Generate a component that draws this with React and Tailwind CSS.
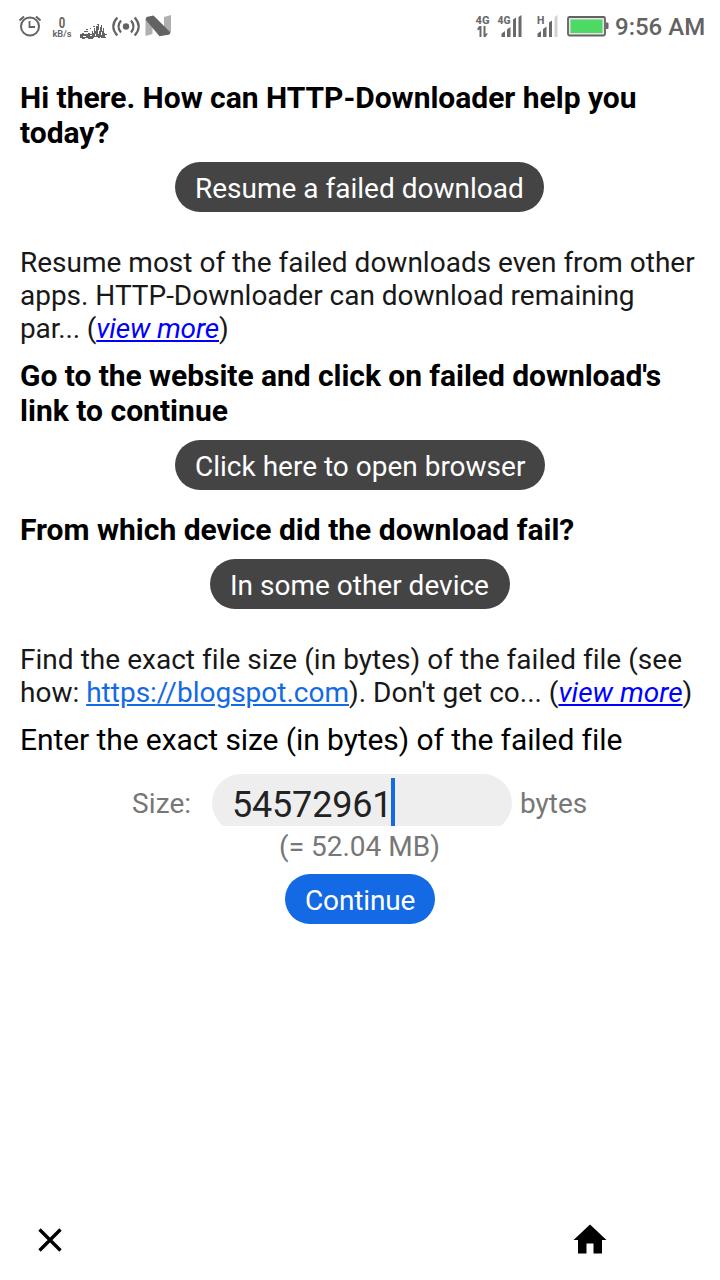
function StatusIconsLeft() {
  return (
    <svg width="190" height="52" viewBox="0 0 190 52" fill="none" stroke="#636363">
      <circle cx="30" cy="26.5" r="9" strokeWidth="2" />
      <path d="M29.5 21v6h5.5" strokeWidth="1.8" />
      <path d="M19.500 20.500l4.500-4M40.500 20.500l-4.500-4" strokeWidth="2" />
      <g fill="#636363" stroke="none" fontFamily="Roboto, sans-serif" textAnchor="middle">
        <text x="62" y="27.500" fontSize="15.500" fontWeight="700" textLength="6.500" lengthAdjust="spacingAndGlyphs">0</text>
        <text x="62" y="37" fontSize="9" fontWeight="600" textLength="19" lengthAdjust="spacingAndGlyphs">kB/s</text>
      </g>
      <path
        d="M80 38v-4h2v-1h2v1h4v-1h2v1h2v-3h1v2h1v-5h1v3h1v-5h2v-2h1v7h1v-4h1v-2h1v6h1v-3h1v5h1v1h2v1h-2v2h1v1h-5v-1h-1v1h-2v-1h-4v1h-1v1h-5v-1h-3v1h-3v-1h-1v1zM84 31h4v1h-4zM86 29h2v1h-2zM90 28h1v1h-1zM93 26h2v1h-2zM97 24h2v1h-2z"
        fill="#636363"
        stroke="none"
        shapeRendering="crispEdges"
      />
      <path d="M83 36.500h3M90 35.500h2M98.500 30v4M101.500 32v3M95.500 34v2" stroke="#fff" strokeWidth="1" shapeRendering="crispEdges" />
      <circle cx="126" cy="26.500" r="3.200" fill="#636363" stroke="none" />
      <path d="M121 20.500q-5 6 0 12M131 20.500q5 6 0 12M117.300 17.500q-8 9 0 18M134.700 17.500q8 9 0 18" strokeWidth="2.200" />
      <path d="M145.500 20l7-3v17l-7 2zM164 17l7-2v17l-7 2z" fill="#b0b0b0" stroke="none" />
      <path d="M145.500 19.500l1-2.500 7-1.500L170.500 32.500l-1 2-10 1.800z" fill="#636363" stroke="none" />
    </svg>
  )
}

function StatusIconsRight() {
  return (
    <svg width="140" height="52" viewBox="470 0 140 52" fill="#6a6a6a">
      <g fontFamily="Roboto, sans-serif" fontWeight="800" fontSize="10.500">
        <text x="475.500" y="24" textLength="14" lengthAdjust="spacingAndGlyphs">4G</text>
        <text x="497.500" y="24" textLength="13" lengthAdjust="spacingAndGlyphs">4G</text>
        <text x="537" y="24">H</text>
      </g>
      <path d="M479.500 26h2v11h-2V29.500l-2 1v-2.500zM483.500 26h2v7.500h2.500l-2.500 3.500h-2z" />
      <path d="M501.500 33.500l3.500-2.500v6h-3.500zM507 29.500l3.500-2.500v10H507zM513 19.500l3-2v19.500h-3zM518.500 17l3-2v22h-3z" />
      <path d="M537.500 33.500l3.500-2.500v6h-3.500zM543 29l3.500-2.500v10.500H543zM549 22.500l3-2v16.500h-3z" />
      <path d="M554.500 17l3-2v22h-3z" fill="#d2d2d2" />
      <rect x="568" y="17" width="37" height="18.500" rx="1.500" fill="#e9e1e9" stroke="#636363" strokeWidth="1.800" />
      <rect x="570.500" y="19.500" width="32" height="13.500" fill="#4cd964" />
      <path d="M606 22.500h1.500q1 0 1 1v4.500q0 1-1 1H606z" />
    </svg>
  )
}

function Pill({ children, className }) {
  return (
    <button className={`block h-[50px] rounded-full px-5 pt-[3px] text-left text-[28px] leading-[47px] whitespace-nowrap text-white ${className}`}>
      {children}
    </button>
  )
}

function ViewMore() {
  return (
    <a className="text-[#0000ff] italic underline">view more</a>
  )
}

export default function App() {
  return (
    <div className="flex h-[1280px] w-[720px] flex-col overflow-hidden bg-white font-['Roboto',sans-serif] text-black">
      <header className="flex h-[52px] shrink-0 items-center">
        <StatusIconsLeft />
        <div className="ml-auto flex items-center">
          <StatusIconsRight />
          <span className="w-[110px] pt-0.5 pl-[5px] text-[24px] leading-7 font-medium whitespace-nowrap text-[#636363]">9:56 AM</span>
        </div>
      </header>

      <main className="flex flex-col items-start px-5 pt-7">
        <h1 className="text-[30px] leading-[35px] font-bold tracking-[-0.02px]">Hi there. How can HTTP-Downloader help you today?</h1>
        <Pill className="mt-3 mr-px w-[369px] self-center bg-[#444444]">Resume a failed download</Pill>
        <p className="mt-[34px] text-[28px] leading-[33px] text-[#181818]">
          Resume most of the failed downloads even from other
          <br />
          <span className="tracking-[-0.02px]">apps. HTTP-Downloader can download remaining</span>
          <br />
          <span className="tracking-[-0.15px]">par... (<ViewMore />)</span>
        </p>
        <h2 className="mt-[13px] text-[30px] leading-[35px] font-bold tracking-[-0.05px]">Go to the website and click on failed download's<br /><span className="tracking-[0.02px]">link to continue</span></h2>
        <Pill className="mt-3 w-[370px] self-center bg-[#444444]">Click here to open browser</Pill>
        <h2 className="mt-[22px] text-[30px] leading-[35px] font-bold">From which device did the download fail?</h2>
        <Pill className="mt-3 w-[300px] self-center bg-[#444444]">In some other device</Pill>
        <p className="mt-[34px] text-[28px] leading-[33px] whitespace-nowrap text-[#181818]">
          <span className="tracking-[0.03px]">Find the exact file size (in bytes) of the failed file (see</span>
          <br />
          how: <a className="text-[#1469e4] underline">https://blogspot.com</a>). Don't get co... (<ViewMore />)
        </p>
        <p className="mt-[13px] text-[30px] leading-[35px] tracking-[-0.08px]">Enter the exact size (in bytes) of the failed file</p>

        <div className="mt-[17px] flex h-[52px] self-center text-[28px] leading-[60px] text-[#777777]">
          <span className="w-20 tracking-[0.1px]">Size:</span>
          <div className="h-[52px] w-[300px] overflow-hidden">
            <div className="flex h-[58px] items-start rounded-[29px] bg-[#eeeeee] pl-5 text-[36px] text-[#222222]">
              <span className="h-[58px] w-[159px] leading-[63px] tracking-[-0.2px]">54572961</span>
              <span className="mt-1 h-[50px] w-1 bg-[#1469e4]" />
            </div>
          </div>
          <span className="w-[76px] pl-2">bytes</span>
        </div>
        <p className="mt-1 mr-px self-center text-[28px] leading-[33px] text-[#777777]">(= 52.04 MB)</p>
        <Pill className="mt-[11px] w-[150px] self-center bg-[#1469e4] tracking-[-0.15px]">Continue</Pill>
      </main>

      <footer className="mt-auto flex h-20 shrink-0 items-center justify-between pr-[110px] pl-[30px]">
        <svg width="40" height="40" viewBox="0 0 40 40" stroke="#000" strokeWidth="3.300">
          <path d="M9.500 9.500l21 21M30.500 9.500l-21 21" />
        </svg>
        <svg width="40" height="40" viewBox="0 0 40 40">
          <path d="M20 4.500L36.500 20H32v13.500h-8.500v-10h-7v10H8V20H3.500z" />
        </svg>
      </footer>
    </div>
  )
}
